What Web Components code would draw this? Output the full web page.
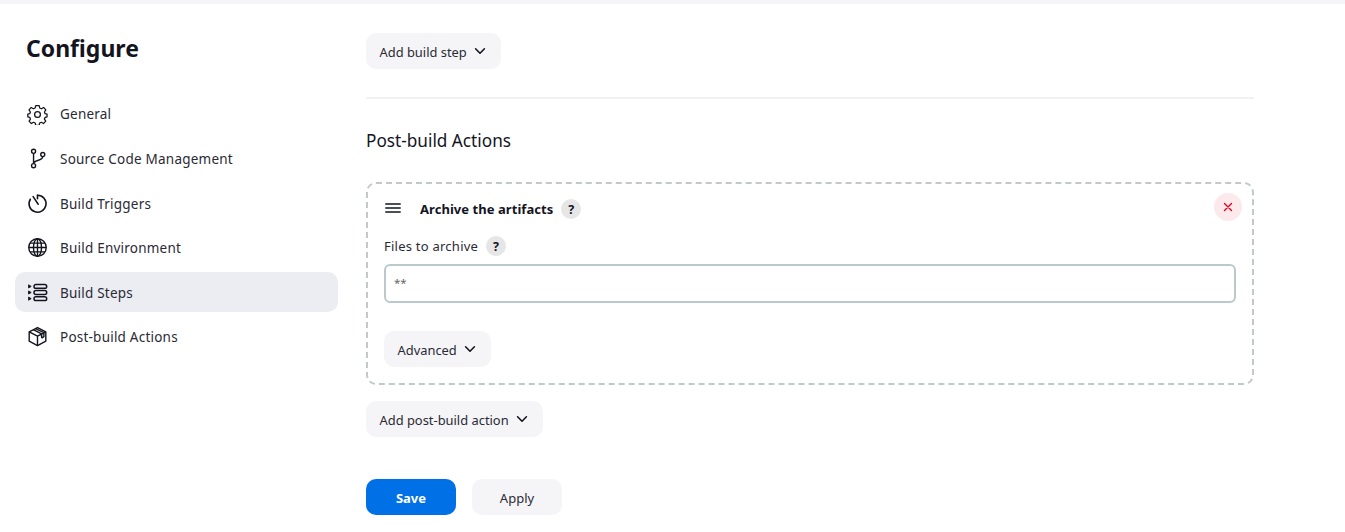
<!DOCTYPE html>
<html><head><meta charset="utf-8"><style>
html,body{margin:0;padding:0;background:#fff;height:532px;overflow:hidden}
body{font-family:"Noto Sans","Open Sans",sans-serif;color:#14141f}
</style></head><body>
<jk-page>
  <jk-side slot="side">
    <jk-item label="General"><svg viewBox="0 0 24 24" fill="none" stroke="currentColor" stroke-width="1.5" stroke-linejoin="round"><circle cx="12" cy="12" r="3.3"/><path d="M10 1.6h4l.7 3 2 .9 2.7-1.6 2.6 3-1.6 2.5.7 2 2.4.6v3.2l-2.4.7-.8 2 1.6 2.5-2.7 2.9-2.6-1.6-2 .9-.7 2.9h-4l-.7-2.9-2-.9-2.6 1.6-2.7-2.9 1.6-2.5-.8-2-2.4-.7v-3.2l2.4-.6.7-2-1.6-2.5 2.6-3 2.7 1.6 2-.9z" transform="translate(.6 .25) scale(.95)"/></svg></jk-item>
    <jk-item label="Source Code Management"><svg viewBox="0 0 24 24" fill="none" stroke="currentColor" stroke-width="1.6"><circle cx="7.5" cy="3.8" r="2.3"/><circle cx="7.5" cy="20.2" r="2.3"/><circle cx="18" cy="7.5" r="2.3"/><path d="M7.5 6.1v11.8M7.5 17.8c0-4.5 10.5-2.5 10.5-8"/></svg></jk-item>
    <jk-item label="Build Triggers"><svg viewBox="0 0 24 24" fill="none" stroke="currentColor" stroke-width="1.8" stroke-linecap="round"><path d="M12 2.5a9.7 9.7 0 1 1-8.2 4.6"/><path d="M12 2.5V6.5M7 4.2 12.8 12.8" /></svg></jk-item>
    <jk-item label="Build Environment"><svg viewBox="0 0 24 24" fill="none" stroke="currentColor" stroke-width="1.6"><circle cx="12" cy="12" r="10"/><ellipse cx="12" cy="12" rx="4.6" ry="10"/><path d="M12 2v20M2 12h20M3.5 7h17M3.5 17h17"/></svg></jk-item>
    <jk-item label="Build Steps" active><svg viewBox="0 0 24 24" fill="none" stroke="currentColor" stroke-width="1.7"><rect x="8" y="2.8" width="14.5" height="4.4" rx="2.2"/><rect x="8" y="9.8" width="14.5" height="4.4" rx="2.2"/><rect x="8" y="16.8" width="14.5" height="4.4" rx="2.2"/><path fill="currentColor" stroke-width="1" d="M1.8 3.2 4.8 5 1.8 6.8zM1.8 10.2 4.8 12 1.8 13.8zM1.8 17.2 4.8 19 1.8 20.8z"/></svg></jk-item>
    <jk-item label="Post-build Actions"><svg viewBox="0 0 24 24" fill="none" stroke="currentColor" stroke-width="1.6" stroke-linejoin="round"><path d="M12 1.8 21.5 6.6v10.8L12 22.4 2.5 17.4V6.6z"/><path d="M2.5 6.6 12 11.5 21.5 6.6M12 11.5v10.9M7.2 4.2l9.5 4.8v4.8M9.8 3l9.5 4.6v4.6l-2.6 1.6"/></svg></jk-item>
  </jk-side>
  <jk-main slot="main">
    <jk-button caret>Add build step</jk-button>
    <jk-divider></jk-divider>
    <jk-heading>Post-build Actions</jk-heading>
    <jk-card></jk-card>
    <jk-button caret>Add post-build action</jk-button>
    <jk-actions></jk-actions>
  </jk-main>
</jk-page>
<script>
function def(name, html, init){
  customElements.define(name, class extends HTMLElement{
    constructor(){super();this.attachShadow({mode:'open'}).innerHTML=html;}
    connectedCallback(){init&&init.call(this);}
  });
}
def('jk-page',`<style>:host{display:flex;flex-direction:column;height:532px}
.top{height:4px;background:#f5f5f7;flex:none}
.row{display:flex;flex:1;min-height:0}
.s{flex:none;width:323px;margin-left:15px}
.m{flex:none;width:888px;margin-left:28px}</style>
<div class="top"></div><div class="row"><div class="s"><slot name="side"></slot></div><div class="m"><slot name="main"></slot></div></div>`);
def('jk-side',`<style>:host{display:block;padding-top:27px}
h1{margin:0 0 0 11px;font:700 23px/34px "Noto Sans",sans-serif;color:#14141f;height:34px}
nav{display:flex;flex-direction:column;gap:4.6px;margin-top:29px}</style>
<h1>Configure</h1><nav><slot></slot></nav>`);
def('jk-item',`<style>:host{display:flex;align-items:center;height:40px;border-radius:10px;padding-left:11.5px;gap:12.5px;font-size:13.5px;letter-spacing:.22px;color:#2a2a36}
:host([active]){background:#ecedf2}
.i{width:21px;height:21px;flex:none;display:block;color:#14141f}
#t{padding-top:.8px}
::slotted(svg){width:21px;height:21px;display:block}</style>
<span class="i"><slot></slot></span><span id="t"></span>`,function(){this.shadowRoot.getElementById('t').textContent=this.getAttribute('label');});
def('jk-main',`<style>:host{display:block;padding-top:29px}</style><slot></slot>`);
const caret=`<svg width="12" height="12" viewBox="0 0 12 12" fill="none" stroke="#14141f" stroke-width="1.6" stroke-linecap="round" stroke-linejoin="round" style="margin-left:7.5px;position:relative;top:-1px"><path d="M1.6 3.8 6 8.2l4.4-4.4"/></svg>`;
def('jk-button',`<style>:host{display:flex;width:fit-content;box-sizing:border-box;align-items:center;height:36px;padding:2px 15px 0 13.5px;background:#f5f5f7;border-radius:10px;font-size:12.9px;color:#2a2a36;white-space:nowrap}</style><slot></slot>${caret}`);
def('jk-divider',`<style>:host{display:block;height:2px;background:#f1f1f4;margin-top:28px}</style>`);
def('jk-heading',`<style>:host{display:block;font-size:17.2px;line-height:26px;color:#14141f;margin-top:29px}</style><slot></slot>`);
def('jk-help',`<style>:host{display:inline-flex;align-items:center;justify-content:center;width:20px;height:20px;border-radius:50%;background:#e6e6e6;font:700 12.5px "Noto Sans",sans-serif;color:#14141f}</style>?`);
def('jk-card',`<style>:host{display:block;margin-top:28px;margin-bottom:16px;height:203px;box-sizing:border-box;border:2px dashed #c1c9cc;border-radius:10px;padding:9px 16px 0}
.h{display:flex;align-items:center;height:30px}
.bars{width:16px;height:10px;margin:0 0 0 1px;flex:none;display:block}
.title{font-size:13px;font-weight:700;letter-spacing:.05px;margin-left:19px;color:#14141f;position:relative;top:1px}
.h jk-help{margin-left:8px;position:relative;top:1px}
.x{margin-left:auto;margin-right:-6px;margin-top:-2px;width:28px;height:28px;border-radius:50%;background:#fbe9ec;display:flex;align-items:center;justify-content:center}
.l{display:flex;align-items:center;height:20px;margin-top:13px;font-size:13px;letter-spacing:.24px;color:#2a2a36;gap:8px}
.inp{height:39px;box-sizing:border-box;border:2px solid #bcc9cc;border-radius:6px;margin-top:8px;padding:0 8px 2px;display:flex;align-items:center;font-size:11.5px;color:#666}
.adv{margin-top:28px}</style>
<div class="h"><svg class="bars" viewBox="0 0 16 10" stroke="#14141f" stroke-width="1.5" stroke-linecap="round"><path d="M.8 1h14.4M.8 5h14.4M.8 9h14.4"/></svg><span class="title">Archive the artifacts</span><jk-help></jk-help>
<span class="x"><svg width="10" height="10" viewBox="0 0 10 10" stroke="#e6001f" stroke-width="1.4" stroke-linecap="round"><path d="M1.5 1.5l7 7M8.5 1.5l-7 7"/></svg></span></div>
<div class="l"><span>Files to archive</span><jk-help></jk-help></div>
<div class="inp">**</div>
<jk-button caret class="adv">Advanced</jk-button>`);
def('jk-actions',`<style>:host{display:flex;gap:16px;margin-top:42px}
.b{width:90px;height:36px;box-sizing:border-box;padding-top:2px;border-radius:10px;display:flex;align-items:center;justify-content:center;font-size:13px}
.save{background:#0070e6;color:#fff;font-weight:700}.apply{background:#f5f5f7;color:#2a2a36}</style>
<div class="b save">Save</div><div class="b apply">Apply</div>`);
</script>
</body></html>
